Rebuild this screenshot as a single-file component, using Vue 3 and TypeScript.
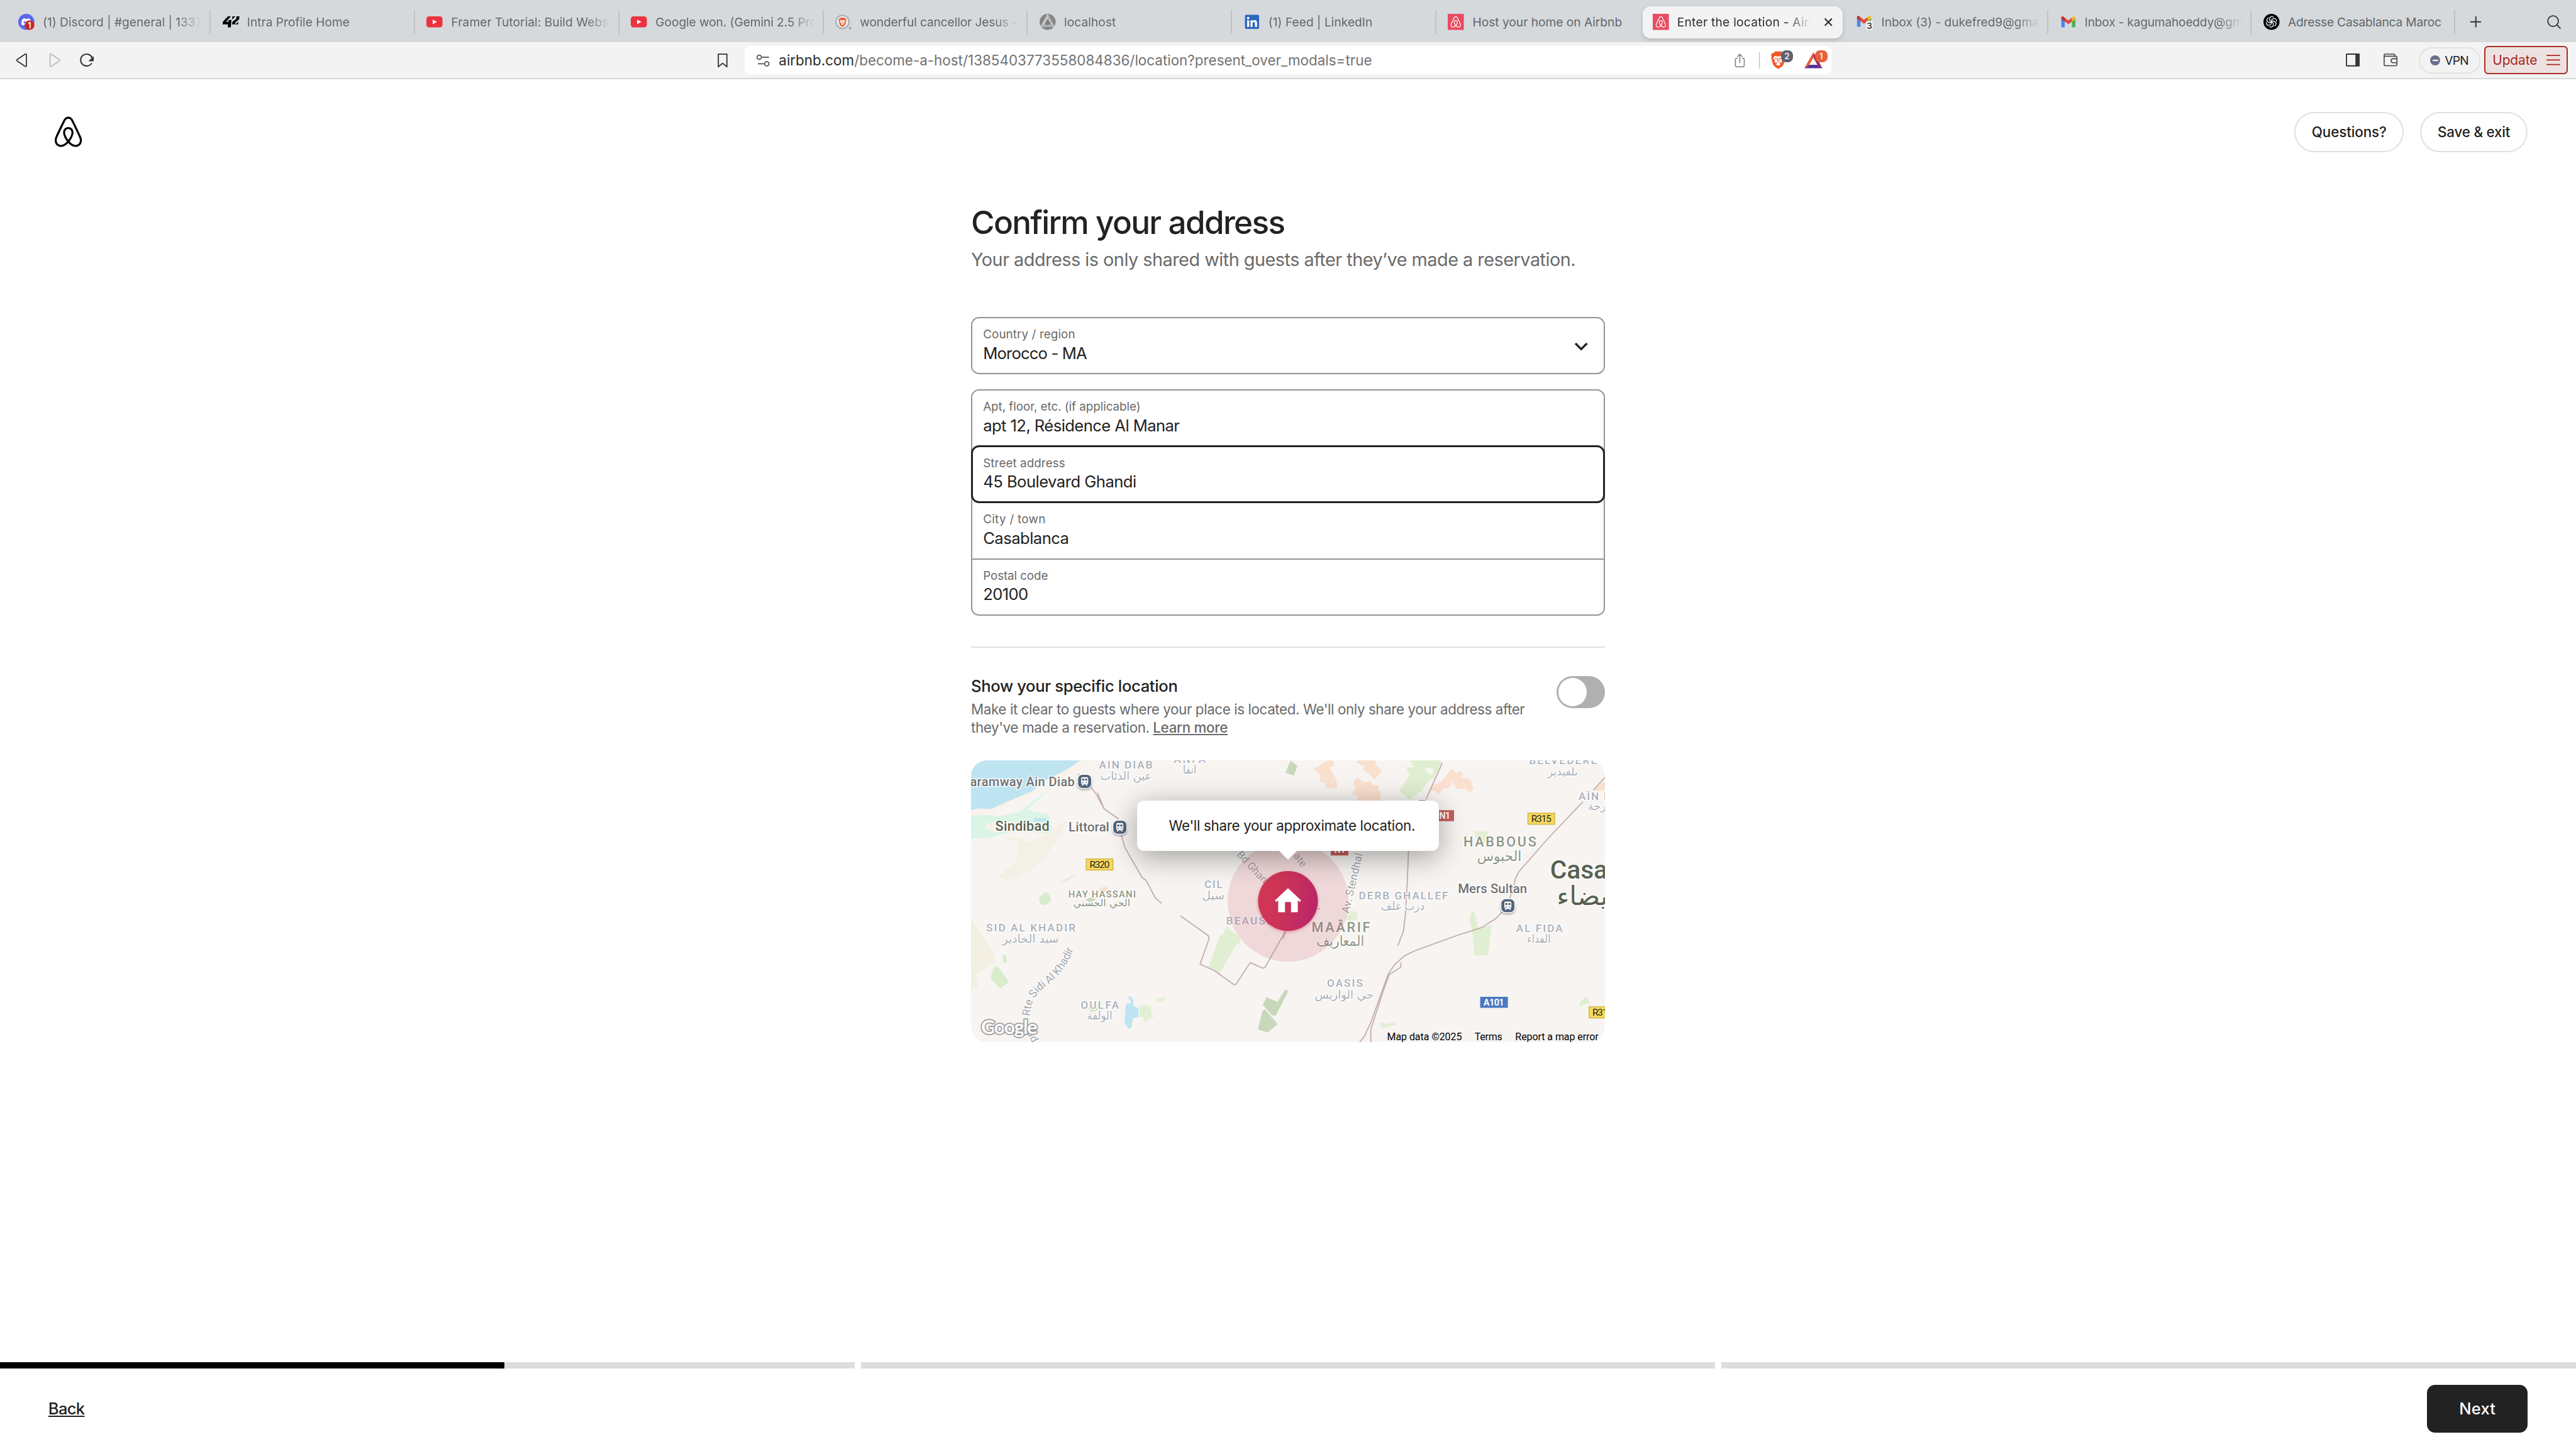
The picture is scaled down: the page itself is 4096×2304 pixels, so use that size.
<script setup lang="ts">
import { ref, type Directive } from 'vue'

interface Tab {
  icon: string
  title: string
  width: number
  narrow?: boolean
  active?: boolean
  noRule?: boolean
}

interface Field {
  label: string
  labelWidth: number
  value: string
  valueWidth: number
  focused?: boolean
}

interface MapLabel {
  t: string
  x: number
  y: number
  w?: number
  s: number
  c?: string
}

// One design unit is a hundredth of the root font size.
const UNIT = 0.8

// Tracks a label so that it takes its design width.
const vFit: Directive<HTMLElement, number> = {
  mounted(el, binding) {
    const chars = (el.textContent ?? '').trim().length
    if (chars < 2) return
    const natural = el.getBoundingClientRect().width
    el.style.letterSpacing = `${(binding.value * UNIT - natural) / (chars - 1)}px`
  },
}

const tabs: Tab[] = [
  { icon: 'discord', title: '(1) Discord | #general | 1337', width: 317 },
  { icon: 'ft', title: 'Intra Profile Home', width: 204 },
  { icon: 'youtube', title: 'Framer Tutorial: Build Websi', width: 318 },
  { icon: 'youtube', title: 'Google won. (Gemini 2.5 Pro', width: 321 },
  { icon: 'brave', title: 'wonderful cancellor Jesus -', width: 313 },
  { icon: 'local', title: 'localhost', width: 103 },
  { icon: 'linkedin', title: '(1) Feed | LinkedIn', width: 207 },
  { icon: 'airbnb', title: 'Host your home on Airbnb', width: 297, noRule: true },
  { icon: 'airbnb', title: 'Enter the location - Airb', width: 277, active: true, noRule: true },
  { icon: 'gmail3', title: 'Inbox (3) - dukefred9@gma', width: 313, narrow: true },
  { icon: 'gmail', title: 'Inbox - kagumahoeddy@gm', width: 315, narrow: true },
  { icon: 'gpt', title: 'Adresse Casablanca Maroc', width: 305, narrow: true },
]

const fields: Field[] = [
  { label: 'Apt, floor, etc. (if applicable)', labelWidth: 313, value: 'apt 12, Résidence Al Manar', valueWidth: 391 },
  { label: 'Street address', labelWidth: 163, value: '45 Boulevard Ghandi', valueWidth: 305, focused: true },
  { label: 'City / town', labelWidth: 124, value: 'Casablanca', valueWidth: 171 },
  { label: 'Postal code', labelWidth: 129, value: '20100', valueWidth: 90 },
]

const progress = [59, 0, 0]
const shareExact = ref(false)

const grey = '#aab0ba'
const olive = '#8d9686'
const dark = '#6f7072'
const latin: MapLabel[] = [
  { t: 'aramway Ain Diab', x: -2, y: 50.7, w: 208, s: 25, c: dark },
  { t: 'AIN DIAB', x: 254.4, y: 16.7, w: 106, s: 21.5 },
  { t: 'ANFA', x: 403, y: 4.8, w: 63.5, s: 21.5 },
  { t: 'Sindibad', x: 48.2, y: 139.5, w: 107.5, s: 27, c: '#596050' },
  { t: 'Littoral', x: 193.8, y: 141.8, w: 81, s: 26, c: dark },
  { t: 'CIL', x: 463.6, y: 253.5, w: 36, s: 21.5 },
  { t: 'HAY HASSANI', x: 193.4, y: 272, w: 134, s: 18.5, c: olive },
  { t: 'BEAUSÉJOUR', x: 507, y: 325.9, w: 158, s: 21.5 },
  { t: 'SID AL KHADIR', x: 30, y: 340, w: 177.5, s: 21.5 },
  { t: 'OULFA', x: 217.8, y: 493.5, w: 76, s: 21.5 },
  { t: 'DERB GHALLEF', x: 770.7, y: 276.5, w: 177.5, s: 21.5 },
  { t: 'MAÂRIF', x: 677, y: 341, w: 116, s: 27, c: olive },
  { t: 'HABBOUS', x: 978.6, y: 171.6, w: 145, s: 27, c: olive },
  { t: 'BELVEDERE', x: 1109, y: 7.5, w: 135, s: 21.5 },
  { t: 'AÏN D', x: 1207.6, y: 79, s: 21.5, w: 64 },
  { t: 'Casa', x: 1151, y: 235, s: 51, w: 114, c: '#596050' },
  { t: 'Mers Sultan', x: 967.7, y: 264, w: 137.5, s: 25.5, c: dark },
  { t: 'AL FIDA', x: 1083.4, y: 341, w: 92.5, s: 21.5 },
  { t: 'OASIS', x: 707.5, y: 450.6, w: 71, s: 21.5 },
]
const arabic: MapLabel[] = [
  { t: 'عين الذئاب', x: 257, y: 38.5, w: 102, s: 23 },
  { t: 'انفا', x: 421, y: 26.5, w: 27, s: 23 },
  { t: 'سيل', x: 459, y: 276.5, w: 45, s: 23 },
  { t: 'الحي الحسني', x: 203, y: 290, w: 113.5, s: 20, c: olive },
  { t: 'سيد الخادير', x: 62, y: 362, w: 112.5, s: 23 },
  { t: 'الولفة', x: 230.4, y: 515, w: 50.5, s: 23 },
  { t: 'درب غلف', x: 814.5, y: 297.5, w: 87, s: 23 },
  { t: 'المعاريف', x: 686.5, y: 369, w: 95, s: 28, c: olive },
  { t: 'الحبوس', x: 1006, y: 200, w: 88, s: 28, c: olive },
  { t: 'بلفيدير', x: 1146, y: 29.7, w: 60, s: 22 },
  { t: 'درجة', x: 1226, y: 98.5, w: 46, s: 23 },
  { t: 'بيضاء', x: 1164, y: 288, w: 118, s: 52, c: '#596050' },
  { t: 'الفداء', x: 1105, y: 362.6, w: 47, s: 23 },
  { t: 'حي الوازيس', x: 683, y: 473.6, w: 117, s: 23 },
]
const stations = [
  [225.8, 41.9],
  [295.7, 133],
  [896.5, 92],
  [1067, 289],
]
</script>

<template>
  <div class="window">
    <svg class="defs" width="0" height="0" aria-hidden="true">
      <defs>
        <symbol id="belo" viewBox="0 0 32 32">
          <path
            d="M16 1c2.008 0 3.463.963 4.751 3.269l.533 1.025c1.954 3.83 6.114 12.54 7.1 14.836l.145.353c.667 1.591.91 2.472.96 3.396l.011.415.001.228c0 4.062-2.877 6.478-6.357 6.478-2.224 0-4.556-1.258-6.709-3.386l-.257-.26-.172-.179h-.011l-.176.185c-2.044 2.1-4.267 3.42-6.414 3.615l-.28.019-.267.006C5.377 31 2.5 28.584 2.5 24.522l.005-.469c.026-.928.23-1.768.83-3.244l.216-.524c.966-2.298 6.083-12.989 7.707-16.034C12.537 1.963 13.992 1 16 1zm0 2c-1.239 0-2.053.539-2.987 2.21l-.523 1.008c-1.926 3.776-6.06 12.43-7.031 14.692l-.345.836c-.427 1.071-.573 1.655-.605 2.24l-.009.33v.206C4.5 27.395 6.411 29 8.857 29c1.773 0 3.87-1.236 5.831-3.354-2.295-2.938-3.855-6.45-3.855-8.91 0-2.913 1.933-5.386 5.178-5.42 3.223.034 5.156 2.507 5.156 5.42 0 2.456-1.555 5.96-3.855 8.907C19.277 27.766 21.37 29 23.142 29c2.447 0 4.358-1.605 4.358-4.478l-.004-.411c-.019-.672-.17-1.296-.714-2.62l-.248-.6c-1.065-2.478-5.993-12.768-7.538-15.664C18.053 3.539 17.24 3 16 3zm.01 10.316c-2.01.021-3.177 1.514-3.177 3.42 0 1.797 1.18 4.58 2.955 7.044l.21.287.174-.234c1.73-2.385 2.898-5.066 2.989-6.875l.006-.221c0-1.906-1.167-3.4-3.156-3.421h-.001z"
          />
        </symbol>
        <symbol id="gmail" viewBox="0 0 32 32">
          <path d="M2 9v15.5A2.5 2.500 0 0 0 4.500 27H8.800V13z" fill="#4a86f0" />
          <path d="M30 9v15.500A2.500 2.500 0 0 1 27.500 27H23.200V13z" fill="#4caf50" />
          <path d="M23.200 7.500L26.400 5.300c1.700-1.100 3.600 0 3.600 2.300V10.300l-6.800 5z" fill="#f7b928" />
          <path d="M8.800 7.500L16 13l7.200-5.500v7.800L16 20.600l-7.200-5.300z" fill="#e34a3d" />
          <path d="M8.800 7.500L5.600 5.300C3.900 4.200 2 5.300 2 7.600v2.700l6.800 5z" fill="#c0322c" />
        </symbol>
        <symbol id="lion" viewBox="0 0 29 36">
          <path d="M8 1h13l3 3.500 2.500-.5L29 8l-1 4 .5 2.500L25 27l-3 4-7.500 5L7 31l-3-4L.5 14.500 1 12 0 8l2.500-4 2.500.5z" fill="#ec5b29" />
          <path d="M7.500 10l5 1 2-.4 2 .4 5-1 3.500 4-4 5 .8 3-1 1.500-3.300-1-1.800 1 3.800 2.500-5 3.800-5-3.800 3.800-2.500-1.800-1-3.300 1-1-1.500.8-3-4-5z" fill="#fff" />
          <path d="M7.500 14.500l4 1M21.500 14.500l-4 1M12.800 14v5.500l1.700 1.500 1.700-1.500V14" fill="none" stroke="#ec5b29" stroke-width="1.500" />
        </symbol>
      </defs>
    </svg>

    <div class="tabbar">
      <div
        v-for="(tab, i) in tabs"
        :key="i"
        class="tab"
        :class="{ narrow: tab.narrow, active: tab.active, ruled: !tab.noRule }"
      >
        <svg class="fav" viewBox="0 0 32 32">
          <template v-if="tab.icon === 'discord'">
            <circle cx="16" cy="16" r="16" fill="#5b68ee" />
            <path d="M8.500 10.500c3-2 4.500-1.800 4.500-1.800l.6 1.200h4.800l.6-1.200s1.500-.2 4.500 1.800c1.800 3.500 2.500 7 2.300 10.500-1.500 1.500-4.300 2.300-4.300 2.300l-1.200-1.800h-8.600L10.500 23.300S7.700 22.500 6.200 21c-.2-3.500.5-7 2.300-10.500z" fill="#fff" />
            <ellipse cx="12.500" cy="16.500" rx="1.800" ry="2.100" fill="#5b68ee" />
            <circle cx="22.500" cy="22.500" r="9.500" fill="#cb2424" />
            <text x="22.500" y="28.300" text-anchor="middle" font-size="16" font-weight="600" fill="#fff">1</text>
          </template>
          <g v-else-if="tab.icon === 'ft'" transform="skewX(-6) translate(2 0)">
            <path d="M9 5h6L6.500 16H11v-3.500L17 12v15h-6v-6H0v-5z" />
            <path d="M18 5h6l-6 6.500zM26 5h6v6l-7 6v4h6v-5l-6 5h-6v-5l7-6z" />
          </g>
          <template v-else-if="tab.icon === 'youtube'">
            <rect x="0" y="5" width="32" height="22" rx="5.500" fill="#eb3340" />
            <path d="M12.500 11.500l8.500 4.500-8.500 4.500z" fill="#fff" />
          </template>
          <template v-else-if="tab.icon === 'brave'">
            <circle cx="14.500" cy="16" r="13" fill="#eceef0" stroke="#abb0b8" stroke-width="3" />
            <circle cx="29.500" cy="28.500" r="2.500" fill="#9aa0ab" />
            <use href="#lion" x="6.500" y="7" width="16" height="19" />
          </template>
          <template v-else-if="tab.icon === 'local'">
            <circle cx="16" cy="16" r="16" fill="#858585" />
            <path d="M16 1L3 25h26z" fill="#a9a9a9" />
            <path d="M16 1L3 25l9.500-7z" fill="#c4c4c4" />
            <path d="M16 10l-5.500 9 5.500 4 5.500-4z" fill="#7d7d7d" />
            <path d="M16 1L3 25h26zM16 10L3 25M16 10l13 15M16 1v9" fill="none" stroke="#dedede" stroke-width="1" />
          </template>
          <template v-else-if="tab.icon === 'linkedin'">
            <rect x="2" y="2" width="28" height="28" rx="2.500" fill="#2b67bd" />
            <circle cx="8.300" cy="8.500" r="2.500" fill="#fff" />
            <path d="M6.200 12.700h4.200V26H6.200zM13 12.700h4v1.900c.8-1.400 2.200-2.200 4-2.200 4 0 5 2.500 5 6V26h-4.200v-6.600c0-1.900-.5-3.200-2.200-3.200-1.800 0-2.500 1.300-2.500 3.200V26H13z" fill="#fff" />
          </template>
          <template v-else-if="tab.icon === 'airbnb'">
            <rect width="32" height="32" fill="#e94c62" />
            <use href="#belo" x="4" y="4" width="24" height="24" fill="#fff" />
          </template>
          <template v-else-if="tab.icon === 'gmail3'">
            <use href="#gmail" width="32" height="32" x="-1" y="-1" />
            <rect x="19" y="14" width="13" height="18" rx="3" fill="#f4f5f5" />
            <text x="25.500" y="29.500" text-anchor="middle" font-size="17" font-weight="500" fill="#111">3</text>
          </template>
          <use v-else-if="tab.icon === 'gmail'" href="#gmail" width="32" height="32" />
          <template v-else>
            <circle cx="16" cy="16" r="16" />
            <g fill="none" stroke="#fff" stroke-width="1.600">
              <path
                v-for="k in 6"
                :key="k"
                d="M12.500 14V9.800a4.300 4.300 0 0 1 7.800-2.400M12.500 14l3.600 2.100"
                :transform="`rotate(${k * 60} 16 16)`"
              />
            </g>
          </template>
        </svg>
        <div class="clip"><span v-fit="tab.width" class="tab-title">{{ tab.title }}</span></div>
        <svg v-if="tab.active" class="close" viewBox="0 0 18 18">
          <path d="M2 2l14 14M16 2L2 16" stroke="#333" stroke-width="2.800" />
        </svg>
      </div>
      <svg class="plus" viewBox="0 0 22 22"><path d="M11 0v22M0 11h22" stroke="#333" stroke-width="2.400" /></svg>
      <svg class="find" viewBox="0 0 28 28">
        <circle cx="12" cy="12" r="10.500" fill="none" stroke="#333" stroke-width="2.200" />
        <path d="M19.500 19.500L27 27" stroke="#333" stroke-width="2.400" />
      </svg>
    </div>

    <div class="toolbar">
      <div class="nav">
        <svg viewBox="0 0 32 32"><path d="M7 14.300L22.500 3.800Q25 2.500 25 5.500v21q0 3-2.500 1.700L7 17.700Q4.500 16 7 14.300z" fill="none" stroke="#333" stroke-width="2.200" /></svg>
        <svg viewBox="0 0 32 32"><path d="M25 14.300L9.500 3.800Q7 2.500 7 5.500v21q0 3 2.500 1.700L25 17.700q2.500-1.700 0-3.400z" fill="none" stroke="#bbb" stroke-width="2.200" /></svg>
        <svg viewBox="0 0 32 32">
          <path d="M25.500 22.500A11.800 11.800 0 1 1 27 11.500" fill="none" stroke="#333" stroke-width="2.600" stroke-linecap="round" />
          <path d="M29.500 8.500v9h-9z" fill="#333" stroke="#333" stroke-width="1" stroke-linejoin="round" />
        </svg>
      </div>
      <svg class="bookmark" viewBox="0 0 20 28"><path d="M1.500 1.500h17v25L10 19.500l-8.500 7z" fill="none" stroke="#333" stroke-width="2.300" /></svg>
      <div class="url">
        <svg class="site" viewBox="0 0 28 28">
          <g fill="none" stroke="#555" stroke-width="2.300">
            <circle cx="6.500" cy="7.500" r="4.300" /><path d="M12 7.500h14" />
            <circle cx="21.500" cy="20.500" r="4.300" /><path d="M4 20.500h12" />
          </g>
        </svg>
        <span v-fit="1179" class="address"><b>airbnb.com</b>/become-a-host/1385403773558084836/location?present_over_modals=true</span>
        <svg class="share" viewBox="0 0 20 28">
          <path d="M6 9.500H4Q1.200 9.500 1.200 12.300v11.500q0 2.800 2.800 2.800h12q2.800 0 2.800-2.800V12.300q0-2.800-2.800-2.800h-2M10 19V2M5 6.500l5-5 5 5" fill="none" stroke="#777" stroke-width="1.800" />
        </svg>
        <i class="split"></i>
        <div class="ext shield"><svg viewBox="0 0 29 36"><use href="#lion" width="29" height="36" /></svg><span class="badge slate">2</span></div>
        <div class="ext bat">
          <svg viewBox="0 0 36 32">
            <path d="M18 0L0 32l10-7 8-14z" fill="#ea5a36" />
            <path d="M18 0l18 32-10-7-8-14z" fill="#962a62" />
            <path d="M0 32l10-7h16l10 7z" fill="#5c3192" />
          </svg>
          <span class="badge">1</span>
        </div>
      </div>
      <svg class="panel" viewBox="0 0 28 26"><rect x="1.300" y="1.300" width="25.400" height="23.400" rx="1" fill="none" stroke="#333" stroke-width="2.300" /><path d="M19 1h8v24h-8z" fill="#38383c" /></svg>
      <svg class="wallet" viewBox="0 0 28 26">
        <g fill="none" stroke="#444" stroke-width="2">
          <path d="M1.200 5.200V22q0 2.300 2.300 2.300h20.800q2.300 0 2.300-2.300V8q0-2.500-2.300-2.500H3.500Q1.200 5.500 1.200 3.300 1.200 1.200 3.500 1.200H20q2.500 0 2.500 4" />
          <path d="M26.500 10.500H19q-4 0-4 4t4 4h7.500" />
        </g>
      </svg>
      <div class="vpn"><i></i><span v-fit="48">VPN</span></div>
      <div class="update">
        <span v-fit="89">Update</span>
        <svg viewBox="0 0 27 22"><path d="M0 1.500h27M0 10.500h27M0 19.500h27" stroke="#a8261f" stroke-width="2.200" /></svg>
      </div>
    </div>

    <header class="header">
      <svg class="logo" viewBox="0 0 32 32"><use href="#belo" width="32" height="32" /></svg>
      <div class="actions">
        <button class="pill q"><span v-fit="149">Questions?</span></button>
        <button class="pill s"><span v-fit="144">Save &amp; exit</span></button>
      </div>
    </header>

    <main class="main">
      <div class="column">
        <h1><span v-fit="625">Confirm your address</span></h1>
        <p class="sub"><span v-fit="1202">Your address is only shared with guests after they’ve made a reservation.</span></p>

        <div class="select">
          <div>
            <div class="label"><span v-fit="183">Country / region</span></div>
            <div class="value"><span v-fit="207">Morocco - MA</span></div>
          </div>
          <svg class="chevron" viewBox="0 0 28 18"><path d="M2.500 2.500L14 14 25.500 2.500" fill="none" stroke="#222" stroke-width="4.200" /></svg>
        </div>

        <div class="group">
          <div v-for="f in fields" :key="f.label" class="row" :class="{ focused: f.focused }">
            <div class="label"><span v-fit="f.labelWidth">{{ f.label }}</span></div>
            <div class="value"><span v-fit="f.valueWidth">{{ f.value }}</span></div>
          </div>
        </div>

        <hr />

        <section class="specific">
          <div>
            <h2><span v-fit="411">Show your specific location</span></h2>
            <p><span v-fit="1101">Make it clear to guests where your place is located. We'll only share your address after</span></p>
            <p><span v-fit="355">they've made a reservation.</span><a v-fit="149">Learn more</a></p>
          </div>
          <button class="toggle" :class="{ on: shareExact }" @click="shareExact = !shareExact"><i></i></button>
        </section>

        <div class="map">
          <svg class="canvas" viewBox="0 0 1260 560">
            <rect width="1260" height="560" fill="#f7f4f1" />
            <g transform="translate(-20 -22) scale(.42088 .38270)">
              <path d="M40 50H620L480 150 410 200 300 255 215 295 145 335 40 345z" fill="#f8f4ec" />
              <path d="M40 50H576L500 105 400 160 335 218 215 274 145 310 80 307 40 320z" fill="#bee4f2" />
              <path d="M40 345L110 340 180 348 275 325 345 265 425 205 310 315 415 338 437 440 330 428 240 430 130 460 40 466z" fill="#daf5e5" />
              <path d="M115 388l50-15 130 12 5 40-150 5-35-20z" fill="#f4f2ea" />
              <path d="M345 357l65 2-8 18-60-2z" fill="#bee4f2" />
              <path d="M40 525L90 485 140 465 260 455 330 487 420 425 510 362 400 560 330 630 222 684 172 660 250 600 276 520 262 480 180 458 110 480z" fill="#f3f0e5" />
              <path d="M40 880L65 905 150 1050 162 1097 68 1175 82 1235 40 1250z" fill="#f3efe3" />
              <path d="M458 705l35-30 55-27-20 18z" fill="#e1f0d2" />
              <path d="M402 740l14 15 10 34-28 20-22-4-9-34z" fill="#d8ebcb" />
              <path d="M655 718l36-2-4 20-10 12-24-8z" fill="#fae0cf" />
              <path d="M588 782l30-16 20 12-26 18z" fill="#c8d8bb" />
              <path d="M195 1072l16-4 8 38-18 4z" fill="#d8ebcb" />
              <path d="M158 1128l18 4 51 76-43 34-46-56z" fill="#d8ebcb" />
              <path d="M603 1342l40-15 8 28-40 12z" fill="#d8ebcb" />
              <path d="M792 1282l10 2 12 18v30l24 12 1 46-26 6-9 50-10 8-22-34 7-100 20 0 5-10-12-14z" fill="#bee4f2" />
              <path d="M845 1330l52 3 0 35 12 28-28 6-4 17-14-3 2-22-22-6z" fill="#e1f0d2" />
              <path d="M924 1295l42-8-14 28-26-2z" fill="#e1f0d2" />
              <path d="M1252 920l65 55 0 35-15 0-82 158-50-38 55-165 12-2z" fill="#e0efd1" />
              <path d="M1530 1250l15 8-58 125-16 0-46-55 18-40 52 24z" fill="#c8d8bb" />
              <path d="M1425 1356l12-4 58 75-46 44-47-16z" fill="#c8d8bb" />
              <g class="rail">
                <path d="M553 127L612 195 636 228 676 310 745 362M645 225L676 310M757 445L775 512 855 665 875 682 918 772 947 800" />
                <path d="M1036 865L1168 968 1172 984 1129 1116 1198 1150 1290 1223 1298 1221 1366 1108 1425 1137 1436 1132 1532 945" />
              </g>
            </g>
            <g transform="translate(620 -22) scale(.42088 .38270)">
              <path d="M36 58l32 28-16 50-40-14z" fill="#c8d8bb" />
              <path d="M205 60l30-8 8 30-24 14 34 62 2 46-48-2-10-30-22-2 0-40-32-24z" fill="#fae0cf" />
              <path d="M355 50l80 8 4 22 30 30-36 45-56-50 8-14-36-22z" fill="#fae0cf" />
              <path d="M350 143l32 30 32-8 8 20 34 4-8 14 14 24-4 42-110 0 4-28-26-8 18-30-12-28z" fill="#fae0cf" />
              <path d="M590 50h140l22 20-40 80-22 10-34 54-58 48-48-46 48-84-16-38 40-2z" fill="#e0efd1" />
              <path d="M676 96l32 4 4 18-16 14-26-22z" fill="#f7f4f1" />
              <path d="M795 102l22 20 20-12 15 20-10 14 44 12 14 46-14 22-30-20-36 4-18-40-20 34-30 4-18 32-14-22-24-2 0-22 50-22z" fill="#fae0cf" />
              <path d="M1505 175l20-5v44h-55z" fill="#fae0cf" />
              <path d="M905 426h63v40l-15 20-35 5z" fill="#e0efd1" />
              <path d="M888 848l14-4 20 82 64-12-18 156-64 0-10-120-14-76z" fill="#e0efd1" />
              <path d="M300 845l30-6 25 14-8 32-28 8-24-12z" fill="#e0efd1" />
              <path d="M1430 1285l20 32-50 18 2-22z" fill="#e0efd1" />
              <path d="M455 1418l32 10 40-12 8 14-68 18z" fill="#e0efd1" />
              <path d="M10 1250l12 2-30 50z" fill="#c8d8bb" />
              <g class="rail">
                <path d="M753 70L673 265M593 525L587 690 578 860 569 944 542 1022M164 828H174M0 985L14 945" />
                <path d="M1520 147L1466 212M1417 272L1250 465 1115 635 1100 665 1070 780M1035 845L1004 880 940 925 820 968 630 1043 575 1072 530 1115 497 1167 470 1250 418 1410 385 1490 362 1521" />
                <path d="M558 1108L556 1132 502 1170 475 1250 415 1455V1521" />
              </g>
            </g>

            <g class="latin">
              <text
                v-for="l in latin"
                :key="l.t"
                :x="l.x"
                :y="l.y"
                :font-size="l.s"
                :fill="l.c || grey"
                :textLength="l.w"
              >{{ l.t }}</text>
            </g>
            <g class="arabic">
              <text
                v-for="l in arabic"
                :key="l.t"
                :x="l.x"
                :y="l.y"
                :font-size="l.s"
                :fill="l.c || grey"
                :textLength="l.w"
                lengthAdjust="spacingAndGlyphs"
              >{{ l.t }}</text>
            </g>
            <g class="street">
              <path id="khadir" d="M117 509C119 490 121 478 129 468C140 453 156 445 169 432C187 412 195 397 205 372" fill="none" />
              <text font-size="22"><textPath href="#khadir" textLength="164">Rte Sidi Al Khadir</textPath></text>
              <text transform="translate(527 188) rotate(47)" font-size="21">Bd Ghandi</text>
              <text transform="translate(640 190) rotate(54)" font-size="21">ate</text>
              <text transform="translate(751 305) rotate(-77)" font-size="22" textLength="122">Av. Stendhal</text>
              <text transform="translate(110 540) rotate(62)" font-size="21">Bd</text>
            </g>

            <g class="shields">
              <g fill="#f7da5c" stroke="#d8b64a" stroke-width="2">
                <rect x="229" y="196" width="53" height="22" />
                <rect x="1107" y="105" width="53" height="22" />
                <rect x="1228.500" y="490" width="53" height="22" />
              </g>
              <path d="M920 99h40v22h-40zM715 167h35v22h-35z" fill="#c5605e" />
              <path d="M1012 470h55v22h-55z" fill="#4a78c2" />
              <g font-size="19" fill="#222">
                <text x="235.500" y="213.400" textLength="40">R320</text>
                <text x="1113.500" y="122.500" textLength="40">R315</text>
                <text x="1235" y="507.500" textLength="40">R317</text>
              </g>
              <g font-size="18" font-weight="700" fill="#fff">
                <text x="930.500" y="116" textLength="22">N1</text>
                <text x="722" y="184" textLength="22">N1</text>
                <text x="1018.500" y="487.500" textLength="41">A101</text>
              </g>
            </g>

            <g v-for="(s, i) in stations" :key="i" :transform="`translate(${s[0]} ${s[1]})`" class="station">
              <rect x="-14" y="-14" width="28" height="28" rx="9.500" fill="#52637a" stroke="#fff" stroke-width="2" />
              <path d="M-4-8.500H4Q7-8.500 7-5.500V3Q7 5.500 4.500 5.800L6 8.500H3.500L2 6H-2L-3.500 8.500H-6L-4.500 5.800Q-7 5.500-7 3V-5.500Q-7-8.500-4-8.500z" fill="#fff" />
              <path d="M-5-5.500H-1V-1.500H-5zM1-5.500H5V-1.500H1z" fill="#52637a" />
              <circle cx="-3.500" cy="2.500" r="1.200" fill="#52637a" /><circle cx="3.500" cy="2.500" r="1.200" fill="#52637a" />
            </g>

            <text class="google" x="20" y="543.500" textLength="112">Google</text>
            <g class="credits">
              <text x="827" y="556" textLength="148.500">Map data ©2025</text>
              <text x="1001" y="556" textLength="55">Terms</text>
              <text x="1081.700" y="556" textLength="165.500">Report a map error</text>
            </g>

            <defs>
              <linearGradient id="rose" x1="0" y1="0" x2="1" y2="0.250">
                <stop offset="0" stop-color="#d23853" />
                <stop offset=".5" stop-color="#cc3359" />
                <stop offset="1" stop-color="#bc2866" />
              </linearGradient>
            </defs>
            <circle cx="630" cy="280" r="120" fill="#c85064" fill-opacity=".17" />
            <circle class="pin" cx="630" cy="279.500" r="59.500" fill="url(#rose)" />
            <path d="M630 254L604 278.500 606.500 281.500 610.500 278V300Q610.500 302 612.500 302H624V283.500Q624 281.500 626 281.500H634Q636 281.500 636 283.500V302H647.500Q649.500 302 649.500 300V278L653.500 281.500 656 278.500z" fill="#fff" />
          </svg>
          <div class="tip"><span v-fit="490">We'll share your approximate location.</span></div>
        </div>
      </div>
    </main>

    <footer>
      <div class="progress">
        <div v-for="(p, i) in progress" :key="i" class="seg"><i :style="{ width: p + '%' }"></i></div>
      </div>
      <div class="bar">
        <a class="back" v-fit="73">Back</a>
        <button class="next"><span v-fit="72">Next</span></button>
      </div>
    </footer>
  </div>
</template>

<style>
html {
  font-size: 80px;
}
body {
  margin: 0;
  background: #fff;
}
</style>

<style scoped>
.window {
  width: 51.2rem;
  height: 28.8rem;
  display: flex;
  flex-direction: column;
  overflow: hidden;
  background: #fff;
  color: #222;
  font-family: Inter, "Liberation Sans", sans-serif;
  font-size: 0.28rem;
}
.defs {
  position: absolute;
}
svg {
  display: block;
  flex: none;
}
span,
a {
  display: inline-block;
  white-space: pre;
}
button {
  font: inherit;
  color: inherit;
  padding: 0;
  cursor: pointer;
}
h1,
h2,
p {
  margin: 0;
}

.tabbar {
  height: 0.84rem;
  box-sizing: border-box;
  padding: 0.04rem 0 0 0.13rem;
  display: flex;
  align-items: center;
  background: #d5d9dc;
  flex: none;
}
.tab {
  width: 4.06rem;
  height: 0.48rem;
  box-sizing: border-box;
  padding: 0 0.15rem 0 0.23rem;
  border-right: 2px solid transparent;
  display: flex;
  align-items: center;
  gap: 0.17rem;
  flex: none;
  font-size: 0.24rem;
  color: #62676b;
}
.tab.ruled {
  border-right-color: #bfc3c6;
}
.tab.narrow {
  width: 4.04rem;
}
.tab.active {
  width: 3.98rem;
  height: 0.64rem;
  margin: 0 0.05rem 0 0.035rem;
  padding: 0 0.19rem 0 0.2rem;
  border: 0;
  border-radius: 0.16rem;
  background: #f3f3f3;
  box-shadow: 0 0.03rem 0.08rem rgba(0, 0, 0, 0.14);
  color: #2b2d30;
}
.fav {
  width: 0.32rem;
  height: 0.32rem;
  overflow: visible;
}
.clip {
  flex: 1;
  min-width: 0;
  overflow: hidden;
  line-height: 0.36rem;
  mask-image: linear-gradient(to right, #000 calc(100% - 0.48rem), transparent);
}
.active .clip {
  margin-right: 0.08rem;
}
.tab:nth-child(8) .clip,
.tab:nth-child(12) .clip {
  mask-image: none;
}
.close {
  width: 0.18rem;
  height: 0.18rem;
}
.plus {
  width: 0.22rem;
  height: 0.22rem;
  margin-left: 0.3rem;
}
.find {
  width: 0.28rem;
  height: 0.28rem;
  margin-left: auto;
  margin-right: 0.3rem;
}

.toolbar {
  height: 0.74rem;
  box-sizing: border-box;
  border-bottom: 2px solid #d5d9dc;
  background: #f3f3f3;
  display: flex;
  align-items: center;
  padding: 0 0.16rem 0 0.28rem;
  flex: none;
}
.nav {
  display: flex;
  gap: 0.32rem;
}
.nav svg {
  width: 0.32rem;
  height: 0.32rem;
}
.bookmark {
  width: 0.2rem;
  height: 0.28rem;
  margin-left: 12.38rem;
}
.url {
  width: 21.6rem;
  height: 0.56rem;
  box-sizing: border-box;
  margin-left: 0.34rem;
  padding: 0 0.08rem 0 0.22rem;
  border-radius: 0.1rem;
  background: #fff;
  display: flex;
  align-items: center;
  color: #727272;
}
.site {
  width: 0.28rem;
  height: 0.28rem;
}
.address {
  margin-left: 0.18rem;
  line-height: 0.4rem;
}
.address b {
  font-weight: 400;
  color: #2c2c2c;
}
.share {
  width: 0.21rem;
  height: 0.28rem;
  margin-left: auto;
}
.split {
  width: 0.02rem;
  height: 0.32rem;
  margin: 0 0.22rem 0 0.27rem;
  background: #b5b5b5;
}
.ext {
  position: relative;
}
.shield {
  width: 0.29rem;
  height: 0.36rem;
  margin-right: 0.37rem;
}
.shield svg {
  width: 0.29rem;
  height: 0.36rem;
}
.bat {
  width: 0.36rem;
  height: 0.32rem;
  margin-right: 0.1rem;
}
.bat svg {
  width: 0.36rem;
  height: 0.32rem;
}
.badge {
  position: absolute;
  left: 0.2rem;
  top: -0.02rem;
  width: 0.24rem;
  height: 0.24rem;
  border-radius: 0.1rem;
  background: #e8603c;
  color: #fff;
  font-size: 0.17rem;
  font-weight: 500;
  line-height: 0.24rem;
  text-align: center;
}
.bat .badge {
  left: 0.22rem;
  top: -0.04rem;
}
.badge.slate {
  background: #5f6272;
}
.panel {
  width: 0.28rem;
  height: 0.26rem;
  margin-left: auto;
}
.wallet {
  width: 0.28rem;
  height: 0.26rem;
  margin-left: 0.48rem;
}
.vpn {
  width: 1.22rem;
  height: 0.52rem;
  box-sizing: border-box;
  margin-left: 0.42rem;
  padding-left: 0.195rem;
  border: 2px solid #e2e2e2;
  border-radius: 0.26rem;
  display: flex;
  align-items: center;
  gap: 0.09rem;
  font-size: 0.24rem;
  color: #1d1d22;
}
.vpn i {
  width: 0.2rem;
  height: 0.2rem;
  border-radius: 50%;
  background: linear-gradient(#fff, #fff) center / 0.11rem 0.03rem no-repeat #6b7090;
}
.update {
  width: 1.66rem;
  height: 0.56rem;
  box-sizing: border-box;
  margin-left: 0.08rem;
  padding: 0 0.13rem 0 0.135rem;
  border: 2px solid #ab2e27;
  border-radius: 0.08rem;
  background: #ede2e1;
  display: flex;
  align-items: center;
  justify-content: space-between;
  font-size: 0.26rem;
  color: #a8261f;
}
.update svg {
  width: 0.27rem;
  height: 0.22rem;
}

.header {
  height: 2.08rem;
  box-sizing: border-box;
  padding: 0 0.96rem 0 1.04rem;
  display: flex;
  align-items: center;
  justify-content: space-between;
  flex: none;
}
.logo {
  width: 0.64rem;
  height: 0.64rem;
  fill: #000;
}
.actions {
  display: flex;
  gap: 0.32rem;
}
.pill {
  height: 0.8rem;
  box-sizing: border-box;
  border: 2px solid #e0e0e0;
  border-radius: 0.4rem;
  background: #fff;
  font-size: 0.28rem;
  font-weight: 500;
}
.pill.q {
  width: 2.18rem;
}
.pill.s {
  width: 2.14rem;
}

.main {
  flex: 1;
  min-height: 0;
  display: flex;
  justify-content: center;
}
.column {
  width: 12.6rem;
  padding-top: 0.4rem;
}
h1 {
  font-size: 0.64rem;
  font-weight: 500;
  line-height: 0.72rem;
}
.sub {
  margin-top: 0.15rem;
  font-size: 0.36rem;
  line-height: 0.48rem;
  color: #6a6a6a;
}
.select {
  height: 1.14rem;
  box-sizing: border-box;
  margin-top: 0.89rem;
  padding: 0.165rem 0.31rem 0 0.215rem;
  border: 2px solid #949494;
  border-radius: 0.16rem;
  display: flex;
  justify-content: space-between;
}
.label {
  font-size: 0.235rem;
  line-height: 0.32rem;
  color: #6a6a6a;
}
.value {
  font-size: 0.32rem;
  line-height: 0.42rem;
}
.chevron {
  width: 0.28rem;
  height: 0.18rem;
  margin-top: 0.315rem;
}
.group {
  margin-top: 0.3rem;
  border: 2px solid #949494;
  border-radius: 0.16rem;
}
.row {
  position: relative;
  height: 1.12rem;
  box-sizing: border-box;
  padding: 0.165rem 0.215rem 0;
  border-top: 2px solid transparent;
}
.row:first-child {
  height: 1.09rem;
  border-top: 0;
}
.row:last-child {
  border-top-color: #949494;
}
.row.focused::after {
  content: "";
  position: absolute;
  inset: -2px;
  border: 3px solid #222;
  border-radius: 0.16rem;
}
hr {
  margin: 0.615rem 0 0.56rem;
  border: 0;
  height: 2px;
  background: #e0e0e0;
}
.specific {
  display: flex;
  justify-content: space-between;
  align-items: flex-start;
}
h2 {
  margin-bottom: 0.09rem;
  font-size: 0.32rem;
  font-weight: 500;
  line-height: 0.4rem;
}
.specific p {
  font-size: 0.28rem;
  line-height: 0.36rem;
  color: #6a6a6a;
  display: flex;
  gap: 0.07rem;
}
.specific a {
  font-weight: 500;
  text-decoration: underline;
  text-decoration-thickness: 0.02rem;
  text-underline-offset: 0.03rem;
  text-decoration-skip-ink: none;
}
.toggle {
  width: 0.96rem;
  height: 0.64rem;
  padding: 0.04rem;
  border: 0;
  border-radius: 0.32rem;
  background: #b0b0b0;
  display: flex;
}
.toggle.on {
  justify-content: flex-end;
  background: #222;
}
.toggle i {
  width: 0.56rem;
  height: 0.56rem;
  border-radius: 50%;
  background: #fff;
}

.map {
  position: relative;
  height: 5.6rem;
  margin-top: 0.47rem;
  border-radius: 0.32rem;
  overflow: hidden;
}
.canvas {
  width: 12.6rem;
  height: 5.6rem;
  font-family: Roboto, "Noto Sans", sans-serif;
}
.rail path {
  fill: none;
  stroke: #bfabad;
  stroke-width: 1.7px;
  stroke-linejoin: round;
  vector-effect: non-scaling-stroke;
}
.latin text,
.arabic text {
  font-weight: 500;
  stroke: rgba(255, 255, 255, 0.85);
  stroke-width: 4px;
  stroke-linejoin: round;
  paint-order: stroke;
}
.arabic text {
  font-family: "DejaVu Sans", sans-serif;
  font-weight: 400;
}
.street text {
  fill: #a3a5a9;
  stroke: rgba(255, 255, 255, 0.8);
  stroke-width: 4px;
  paint-order: stroke;
}
.station {
  filter: drop-shadow(0 2px 1.5px rgba(0, 0, 0, 0.35));
}
.google {
  font-family: Lato, sans-serif;
  font-size: 39px;
  font-weight: 700;
  fill: #fff;
  stroke: #9d9d9d;
  stroke-width: 4.500px;
  stroke-linejoin: round;
  paint-order: stroke;
}
.credits {
  font-size: 20px;
  fill: #000;
}
.pin {
  filter: drop-shadow(0 2px 3px rgba(200, 40, 80, 0.4));
}
.tip {
  position: absolute;
  left: 3.3rem;
  top: 0.8rem;
  width: 6rem;
  height: 1rem;
  box-sizing: border-box;
  padding-left: 0.63rem;
  border-radius: 0.14rem;
  background: #fff;
  box-shadow: 0 0.12rem 0.56rem rgba(0, 0, 0, 0.36);
  font-size: 0.28rem;
  line-height: 1.01rem;
}
.tip::after {
  content: "";
  position: absolute;
  left: 2.82rem;
  top: 1rem;
  border: 0.18rem solid transparent;
  border-top-color: #fff;
  border-bottom: 0;
}

footer {
  flex: none;
}
.progress {
  height: 0.12rem;
  display: flex;
  gap: 0.12rem;
}
.seg {
  flex: 1;
  background: #ddd;
}
.seg i {
  display: block;
  height: 100%;
  background: #000;
}
.bar {
  height: 1.6rem;
  box-sizing: border-box;
  padding: 0 0.96rem;
  display: flex;
  align-items: center;
  justify-content: space-between;
  font-size: 0.32rem;
  font-weight: 500;
}
.back {
  line-height: 0.4rem;
  text-decoration: underline;
  text-decoration-thickness: 0.03rem;
  text-underline-offset: 0.03rem;
  text-decoration-skip-ink: none;
}
.next {
  width: 2rem;
  height: 0.96rem;
  border: 0;
  border-radius: 0.16rem;
  background: #222;
  color: #fff;
}
</style>
